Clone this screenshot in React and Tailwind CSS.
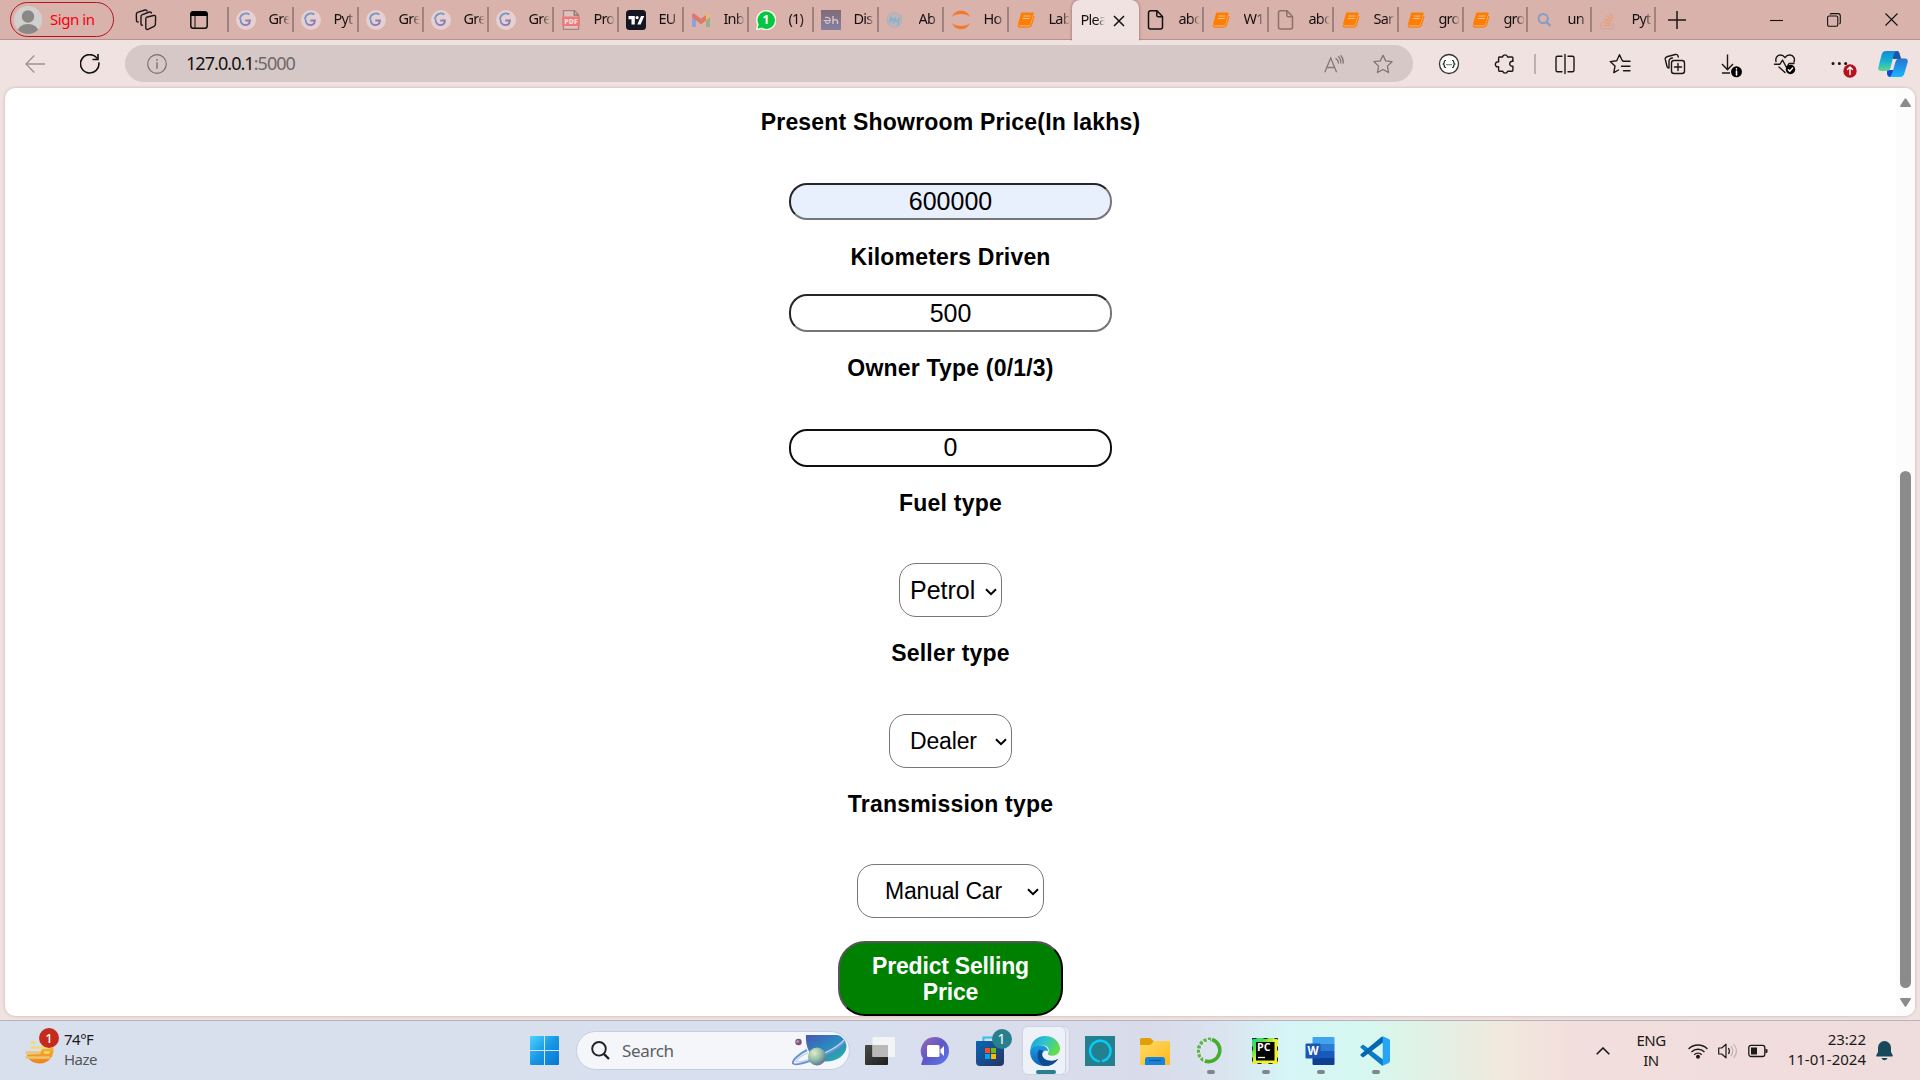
import React from "react";

const UI = "font-['Noto_Sans','Open_Sans',sans-serif]";

const GIcon = () => (
  <svg width="20" height="20" viewBox="0 0 20 20" className="shrink-0">
    <defs>
      <linearGradient id="gg" x1="0" y1="0" x2="1" y2="1">
        <stop offset="0" stopColor="#6fa3cf" />
        <stop offset="1" stopColor="#8d71ab" />
      </linearGradient>
    </defs>
    <circle cx="10" cy="10" r="10" fill="#e6cfd0" />
    <path d="M13.3 4.4A6 6 0 0 0 4 9.4M4.8 9.6c-.6 3.4 1.800 5.700 4.700 5.500 2.800-.2 4.300-2.100 4.400-4.600H9.300" fill="none" stroke="url(#gg)" strokeWidth="1.800" />
  </svg>
);
const PdfIcon = () => (
  <svg width="20" height="20" viewBox="0 0 20 20" className="shrink-0">
    <path d="M2.500 .7h11l4 4v14.600h-15z" fill="#e0c3bf" stroke="#a08580" strokeWidth="1.300" />
    <path d="M13.200 .7v4.300h4.300" fill="none" stroke="#8c7673" strokeWidth="1.300" />
    <rect x="1" y="6.500" width="18" height="9.500" rx="1" fill="#ec7b7b" />
    <text x="10" y="13.900" textAnchor="middle" fontSize="7" fontWeight="800" fontFamily="Open Sans" fill="#f6dcdc">PDF</text>
  </svg>
);
const TvIcon = () => (
  <svg width="20" height="20" viewBox="0 0 20 20" className="shrink-0">
    <rect width="20" height="20" rx="3.500" fill="#131722" />
    <path d="M2.500 6h6.300v8.500H5.500V9.200h-3zM15 6h3.300l-3.700 8.500h-3.300z" fill="#fff" />
    <circle cx="11.100" cy="7.600" r="1.600" fill="#fff" />
  </svg>
);
const GmailIcon = () => (
  <svg width="20" height="20" viewBox="0 0 20 20" className="shrink-0">
    <path d="M1 5.500V16a1 1 0 0 0 1 1h3V8z" fill="#8ca4d8" />
    <path d="M19 5.500V16a1 1 0 0 1-1 1h-3V8z" fill="#93b18a" />
    <path d="M15 5l1.500-1.300C17.500 3 19 3.500 19 5v2l-4 3.500z" fill="#ecbf5c" />
    <path d="M1 7V5c0-1.500 1.500-2 2.500-1.300L10 8.800l5-3.800v5.500L10 14.200z" fill="#e2766d" />
  </svg>
);
const WaIcon = () => (
  <svg width="20" height="20" viewBox="0 0 20 20" className="shrink-0">
    <path d="M.5 19.800 1.900 14.500A9.400 9.400 0 1 1 5.700 18.400z" fill="#06c63f" stroke="#f5f5ef" strokeWidth="1.500" />
    <text x="10" y="14.300" textAnchor="middle" fontSize="12" fontWeight="700" fontFamily="Noto Sans" fill="#fff">1</text>
  </svg>
);
const DhIcon = () => (
  <svg width="20" height="20" viewBox="0 0 20 20" className="shrink-0">
    <defs><linearGradient id="dh" x1="0" y1="0" x2="0" y2="1"><stop offset="0" stopColor="#806a76" /><stop offset="1" stopColor="#8580a2" /></linearGradient></defs>
    <rect width="20" height="20" fill="url(#dh)" />
    <path d="M4 7.500c3-.7 5.300.5 5.200 2.800-.1 2-1.700 3.200-3.400 3-1.800-.4-1.600-2.600 0-2.800h3M2.500 10.500h3" fill="none" stroke="#d8c4cd" strokeWidth="1.200" />
    <path d="M12 6v8M12 11.200c.8-2.200 4.500-2.200 4.500.5V14" fill="none" stroke="#d8c4cd" strokeWidth="1.400" />
  </svg>
);
const WpIcon = () => (
  <svg width="20" height="20" viewBox="0 0 20 20" className="shrink-0">
    <circle cx="8.500" cy="10" r="7.800" fill="#c3b3b4" />
    <path d="M3.500 13 5 7l.5 4c1-3 3-3 2.500 0L7.300 13.500M9.500 7.500c-.7 3 .5 4 1.700 3.300 1.300-.8 1.700-2 1.900-3.300l-1.200 8" fill="none" stroke="#7eb3d4" strokeWidth="1.400" />
    <circle cx="8.500" cy="10" r="7.300" fill="none" stroke="#a3b5c2" strokeWidth="1" />
  </svg>
);
const JupIcon = () => (
  <svg width="20" height="20" viewBox="0 0 20 20" className="shrink-0">
    <path d="M.8 7C3 2.500 6 .8 10 .8S17 2.500 19.200 7C16.500 4.700 13.500 4 10 4S3.500 4.700.8 7zM.8 13c2.200 4.500 5.200 6.200 9.200 6.200s7-1.700 9.200-6.200c-2.700 2.300-5.700 3-9.200 3s-6.500-.7-9.200-3z" fill="#f5792a" />
  </svg>
);
const BookIcon = () => (
  <svg width="20" height="20" viewBox="0 0 20 20" className="shrink-0">
    <path d="M6 2.500h10.500c1 0 1.400.7 1.200 1.500l-3 10.500c-.3 1-1 1.500-2 1.500H3.500c-1.200 0-1.900-.8-1.500-2L5 3.500c.2-.7.500-1 1-1z" fill="#ff7d00" />
    <path d="M7.500 6h7M6.800 8.500h7" stroke="#f6c79f" strokeWidth="1.100" />
    <path d="M2 14.500c0 1 .8 1.400 1.700 1.400h9c1 0 1.800-.5 2.100-1.500L17.500 5" fill="none" stroke="#efb98c" strokeWidth="1" />
    <path d="M2 15.500c.3 1.200 1 1.600 2 1.600h8.800c1.300 0 2.200-.7 2.600-2L18 6" fill="none" stroke="#ff7d00" strokeWidth="1.300" />
  </svg>
);
const FileIcon = ({ c }) => (
  <svg width="20" height="20" viewBox="0 0 20 20" className="shrink-0">
    <path d="M4.500 .8H11l5.500 5.700V17a2 2 0 0 1-2 2h-10a2 2 0 0 1-2-2V2.800a2 2 0 0 1 2-2zM10.800 1v4.200c0 1 .6 1.600 1.600 1.600h4" fill="none" stroke={c} strokeWidth="1.500" />
  </svg>
);
const FindIcon = () => (
  <svg width="20" height="20" viewBox="0 0 20 20" className="shrink-0">
    <circle cx="8.200" cy="8.500" r="4.600" fill="none" stroke="#849dc4" strokeWidth="2" />
    <path d="M11.500 12l4 4" stroke="#849dc4" strokeWidth="2.400" />
  </svg>
);
const SoIcon = () => (
  <svg width="20" height="20" viewBox="0 0 20 20" className="shrink-0">
    <path d="M2 13v5.700h12V13" fill="none" stroke="#d0a9a3" strokeWidth="1.500" />
    <path d="M4.500 15.500h7M4.600 12.300l7 1.500M5.500 9l6.500 3M7.500 5.500l5.300 4.800M10.500 3l3.800 5.800" stroke="#e9a07c" strokeWidth="1.600" fill="none" />
  </svg>
);

const tabsLeft = [
  [GIcon, "Gre"], [GIcon, "Pyt"], [GIcon, "Gre"], [GIcon, "Gre"], [GIcon, "Gre"],
  [PdfIcon, "Pro"], [TvIcon, "EU"], [GmailIcon, "Inb"], [WaIcon, "(1)"], [DhIcon, "Dis"],
  [WpIcon, "Ab"], [JupIcon, "Ho"], [BookIcon, "Lab"],
];
const tabsRight = [
  [FileIcon, "abc", "#111"], [BookIcon, "W1"], [FileIcon, "abc", "#8b706d"], [BookIcon, "Sar"],
  [BookIcon, "gro"], [BookIcon, "gro"], [FindIcon, "un"], [SoIcon, "Pyt"],
];

const Tab = ({ icon: Icon, text, c, last, narrow }) => (
  <div className={`flex h-full shrink-0 items-center pl-[7px] ${narrow ? "w-16" : "w-[65px]"}`}>
    <Icon c={c} />
    <div className="ml-[13px] w-[22px] shrink-0 pb-px whitespace-nowrap text-[14.5px] tracking-[-0.8px] text-[#151010] [mask-image:linear-gradient(90deg,#000_55%,transparent_95%)]">{text}</div>
    {!last && <div className="ml-auto h-[25px] w-[1.500px] shrink-0 bg-[#a08380]" />}
  </div>
);

const Tool = ({ children, w }) => (
  <svg width="24" height="24" viewBox="0 0 24 24" fill="none" stroke="#1b1717" strokeWidth={w || 1.400} strokeLinecap="round" strokeLinejoin="round" className="shrink-0 overflow-visible">
    {children}
  </svg>
);

const Label = ({ children, className }) => (
  <div className={`h-[26px] whitespace-nowrap text-[23px] leading-[26px] font-bold tracking-[0.2px] ${className}`}>{children}</div>
);

const Field = ({ children, className }) => (
  <div className={`flex w-[323px] items-center justify-center rounded-[18px] border-2 text-[25px] leading-none ${className}`}>{children}</div>
);

const Select = ({ children, className }) => (
  <div className={`flex h-[54px] items-center justify-between rounded-[17px] border border-[#767676] bg-white pr-[4px] ${className}`}>
    <span className="whitespace-nowrap">{children}</span>
    <svg width="12" height="8" viewBox="0 0 12 8" className="mt-[2px]">
      <path d="M1 1.300 6 6.200 11 1.300" fill="none" stroke="#000" strokeWidth="2" />
    </svg>
  </div>
);

const Cell = ({ children, dot }) => (
  <div className="relative flex h-full w-[55px] shrink-0 items-center justify-center">
    {children}
    {dot && <div className="absolute bottom-[6px] left-[24px] h-1 w-2 rounded-full bg-[#7f878b]" />}
  </div>
);

function TabStrip() {
  return (
    <div className={`flex h-10 items-center border-b border-[#b8918d] bg-[#d9b2ac] ${UI}`}>
      <div className="ml-[10px] flex h-[35px] w-[104px] shrink-0 items-center rounded-full border border-[#b0171f] pl-[3px]">
        <svg width="28" height="28" viewBox="0 0 28 28">
          <defs><clipPath id="av"><circle cx="14" cy="14" r="14" /></clipPath></defs>
          <g clipPath="url(#av)">
            <rect width="28" height="28" fill="#d2d0ce" />
            <circle cx="14" cy="10.500" r="6.200" fill="#8a8886" />
            <ellipse cx="14" cy="26" rx="10.500" ry="8" fill="#8a8886" />
          </g>
        </svg>
        <span className="ml-[8px] whitespace-nowrap text-[15px] tracking-[-0.45px] text-[#f5000c]">Sign in</span>
      </div>
      <svg className="ml-[21px] shrink-0" width="22" height="22" viewBox="0 0 22 22" fill="none" stroke="#1b1717" strokeWidth="1.400" strokeLinejoin="round" strokeLinecap="round">
        <path d="M11.500 8.300 18.600 6.500c1.100-.3 2 .3 2 1.400l-.2 7.400c0 1-.5 1.600-1.300 2l-6.300 3c-1.200.5-2-.1-2-1.300v-8.900c0-1 .2-1.600.7-1.800z" />
        <path d="M7.500 16.200c-1 .3-1.500-.3-1.500-1.200V7.600c0-1 .4-1.700 1.400-2l7-2.600c1-.3 1.800.2 2 1" />
        <path d="M3.200 13c-1 .2-1.700-.3-1.700-1.300L1.300 5.500c0-1 .4-1.800 1.300-2.200L10 1c1-.3 1.800 0 2 1" />
      </svg>
      <svg className="ml-[33px] shrink-0" width="18" height="18" viewBox="0 0 18 18">
        <rect x=".8" y=".8" width="16.400" height="16.400" rx="2.500" fill="none" stroke="#111" strokeWidth="1.500" />
        <path d="M.5 5V3A2.500 2.500 0 0 1 3 .5h12A2.500 2.500 0 0 1 17.500 3v2z" fill="#000" />
        <path d="M5 5v12" stroke="#111" strokeWidth="1" />
      </svg>
      <div className="ml-[19px] h-[25px] w-[1.500px] shrink-0 bg-[#a08380]" />
      {tabsLeft.map(([I, t], i) => <Tab key={i} icon={I} text={t} last={i === 12} />)}
      <div className="relative z-10 -ml-[2px] flex h-[41px] w-[67px] shrink-0 items-center self-start rounded-t-lg bg-[#f0e2e1] pl-[9px] shadow-[0_0_3px_rgba(90,40,40,0.6)] [clip-path:inset(-4px_-4px_0_-4px)]">
        <div className="w-[24px] pb-[2px] whitespace-nowrap text-[14.5px] tracking-[-0.7px] text-[#151010] [mask-image:linear-gradient(90deg,#000_65%,transparent_100%)]">Plea</div>
        <svg className="ml-[8px]" width="12" height="12" viewBox="0 0 12 12"><path d="M1 1l10 10M11 1 1 11" stroke="#111" strokeWidth="1.500" /></svg>
      </div>
      {tabsRight.map(([I, t, c], i) => <Tab key={i} icon={I} text={t} c={c} narrow={i > 4} />)}
      <svg className="ml-[12px] shrink-0" width="18" height="18" viewBox="0 0 18 18"><path d="M0 9h18M9 0v18" stroke="#1b1717" strokeWidth="1.500" /></svg>
      <svg className="ml-auto shrink-0" width="14" height="14" viewBox="0 0 14 14"><path d="M0 7.500h13" stroke="#111" strokeWidth="1.100" /></svg>
      <svg className="ml-[43px] shrink-0" width="14" height="14" viewBox="0 0 14 14" fill="none" stroke="#111" strokeWidth="1.100">
        <rect x=".6" y="3" width="10.200" height="10.200" rx="1.500" />
        <path d="M3 1.300C3.500.7 4 .6 4.500.6H11A2.400 2.400 0 0 1 13.300 3v6.500c0 .8-.3 1.200-.8 1.500" />
      </svg>
      <svg className="mr-[22px] ml-[44px] shrink-0" width="13" height="13" viewBox="0 0 13 13"><path d="M.5.5l12 12M12.500.5l-12 12" stroke="#111" strokeWidth="1.100" /></svg>
    </div>
  );
}

function Toolbar() {
  return (
    <div className={`flex h-12 items-center bg-[#f0e2e1] ${UI}`}>
      <svg className="ml-[25px] shrink-0" width="20" height="18" viewBox="0 0 20 18" fill="none" stroke="#9d9190" strokeWidth="1.300"><path d="M20 9H1M9.300.5 1 9l8.300 8.500" /></svg>
      <svg className="ml-[35px] shrink-0" width="20" height="20" viewBox="0 0 20 20" fill="none" stroke="#111" strokeWidth="1.600"><path d="M18.800 8.300A9.200 9.200 0 1 1 17 4.200M18 0v5.500h-5.500" /></svg>
      <div className="-mt-[1px] ml-[25px] flex h-[37px] w-[1288px] shrink-0 items-center rounded-full bg-[#d6c8c7] pl-[22px]">
        <svg width="20" height="20" viewBox="0 0 20 20" fill="none" stroke="#777070" strokeWidth="1.200"><circle cx="10" cy="10" r="9.300" /><path d="M10 8.300v6.500M10 5v1.700" strokeWidth="1.400" /></svg>
        <span className="-mt-[2px] ml-[19px] text-[18px] leading-none tracking-[-0.95px] text-[#111]">127.0.0.1<span className="text-[#6f6968]">:5000</span></span>
        <svg className="ml-auto" width="20" height="18" viewBox="0 0 20 18" fill="none" stroke="#857a79" strokeWidth="1.300">
          <path d="M.8 17.300 6.700 3l5.900 14.300M3 12.500h7.500M11.500 3.300c2 1 3 3 2.800 5.200M14 1.200c2.300 1.500 3 4.500 2.700 7.300M16.500.3c2.300 2 3 5 2.700 8.500" />
        </svg>
        <svg className="mr-[20px] ml-[29px]" width="20" height="20" viewBox="0 0 20 20" fill="none" stroke="#7f7574" strokeWidth="1.300" strokeLinejoin="round"><path d="M10 1.200l2.700 5.700 6.300.8-4.600 4.400 1.100 6.400-5.500-3-5.500 3 1.100-6.400L1 7.700l6.300-.8z" /></svg>
      </div>
      <div className="ml-[24px] flex items-center">
        <Tool w={1.300}><circle cx="12" cy="12" r="9.500" fill="#fff" stroke="#333" /><path d="M8.500 8.500c-1.300 0-1.300.6-1.300 1.700s-.2 1.800-1.200 1.800c1 0 1.200.7 1.200 1.800s0 1.700 1.300 1.700M15.500 8.500c1.300 0 1.300.6 1.300 1.700s.2 1.800 1.200 1.800c-1 0-1.200.7-1.200 1.800s0 1.700-1.300 1.700M10 12.700h.1M12 12.700h.1M14 12.700h.1" strokeWidth="1.200" /></Tool>
        <div className="ml-[32px] flex"><Tool><path d="M6 5h3.500a2.600 2.600 0 0 1 5.100 0H19c.6 0 .9.300.9.900v3.500c-4-.8-4.500 5.300 0 4.900v4c0 .6-.3.900-.9.900h-4.300a2.600 2.600 0 0 1-5 0H6.500c-.6 0-.9-.3-.9-.900v-3.500c-4.200 1-4.500-5.500 0-5V5.900c0-.6.100-.9.400-.9z" /></Tool></div>
        <div className="ml-[17px] h-5 w-[1.500px] bg-[#bdb0af]" />
        <div className="ml-[17px] flex"><Tool><path d="M9 4.200H4.500a1.500 1.500 0 0 0-1.500 1.500v12.600a1.500 1.500 0 0 0 1.500 1.500H9M15 4.200h4.500A1.500 1.500 0 0 1 21 5.700v12.600a1.500 1.500 0 0 1-1.500 1.500H15M12 2.500v19" strokeWidth="1.400" /></Tool></div>
        <div className="ml-[31px] flex"><Tool><path d="M14 8 11.500 2.700 8.700 8.700l-6.500.9 4.800 4.500-1.200 6.500 4.700-2.600M15 9.200h7M13.500 14.200H22M15.500 18.700H22M14 8l1 1.200" /></Tool></div>
        <div className="ml-[31px] flex"><Tool><rect x="8.500" y="8.500" width="13" height="13" rx="2.500" /><path d="M15 11.500v7M11.500 15h7M6 16c-1 0-1.700-.5-2-1.500L2.300 7.500C2 6 2.500 5.200 3.800 4.800l8.500-2.300c1.400-.4 2.300.2 2.700 1.500l.3 1M6 16V9.500A3.500 3.500 0 0 1 9.500 6" /></Tool></div>
        <div className="ml-[32px] flex"><Tool><path d="M8.500 2.500v15M3 12l5.500 5.700L14 12M3 21h8" strokeLinecap="butt" /><circle cx="17.500" cy="19.800" r="5.500" fill="#000" stroke="none" /><path d="M17.500 19v4M17.500 16.800v.2" stroke="#fff" strokeWidth="1.600" /></Tool></div>
        <div className="ml-[30px] flex"><Tool><path d="M12 20.500 6 15M3 9.500c-.8-3.500 1-6.300 4-6.500 2.200-.2 3.800.9 5 2.700 1.200-1.800 2.800-2.900 5-2.700 3.500.3 5.300 3.500 4 7M1.500 12.200H7L9.500 8l4 7.500 2.500-4h5" /><circle cx="17.500" cy="17.500" r="4.700" fill="#000" stroke="none" /><path d="M15.300 17.700l1.500 1.500 2.800-3.200" stroke="#fff" /></Tool></div>
        <div className="ml-[33px] flex"><Tool><path d="M3 11.500h.1M9.300 11.500h.1M15.600 11.500h.1" strokeWidth="3" /><circle cx="20" cy="19" r="6.700" fill="#b5121b" stroke="none" /><path d="M20 22.500v-7M17.500 17.500l2.500-2.500 2.500 2.500" stroke="#fff" strokeWidth="1.400" /></Tool></div>
      </div>
      <svg className="mr-[12px] ml-auto shrink-0" width="30" height="28" viewBox="0 0 30 28">
        <defs>
          <linearGradient id="c1" x1="0" y1="0" x2="0" y2="1"><stop offset="0" stopColor="#1489d4" /><stop offset=".5" stopColor="#13b2d2" /><stop offset="1" stopColor="#62d78f" /></linearGradient>
          <linearGradient id="c2" x1="0" y1="0" x2="0" y2="1"><stop offset="0" stopColor="#2872d0" /><stop offset="1" stopColor="#17b8fb" /></linearGradient>
        </defs>
        <path d="M15 1h4c2 0 2.500 2 3 4l1.300 4H15z" fill="#1558a5" />
        <path d="M9 20h7l-3 7c-2 .3-3.300-.5-4-3z" fill="#1848cf" />
        <path d="M8 1h11c-2 .5-2.800 2-3.300 4l-3 12c-.8 3-2 4-4.700 4H3c-2.200 0-3.200-1.500-2.600-4L3.500 5C4.200 2.300 5.500 1 8 1z" fill="url(#c1)" />
        <path d="M22 27H11c2-.5 2.800-2 3.300-4l3-10.500c.8-3 2-4 4.700-4h5c2.200 0 3.200 1.500 2.600 4L26.500 23c-.7 2.700-2 4-4.500 4z" fill="url(#c2)" />
      </svg>
    </div>
  );
}

function Page() {
  return (
    <div className="mx-[5px] flex h-[928px] overflow-hidden rounded-[10px] bg-white shadow-[0_0_3px_rgba(120,70,70,0.35)]">
      <div className="flex w-[1891px] flex-col items-center font-['Liberation_Sans',Arial,sans-serif] text-black">
        <Label className="mt-[21px]">Present Showroom Price(In lakhs)</Label>
        <Field className="mt-[48px] h-[37px] border-t-[#262626] border-r-[#767676] border-b-[#767676] border-l-[#262626] bg-[#e8f0fe]">600000</Field>
        <Label className="mt-[24px]">Kilometers Driven</Label>
        <Field className="mt-[24px] h-[38px] border-t-[#262626] border-r-[#767676] border-b-[#767676] border-l-[#262626]">500</Field>
        <Label className="mt-[23px]">Owner Type (0/1/3)</Label>
        <Field className="mt-[48px] h-[38px] border-[#101010] pb-px">0</Field>
        <Label className="mt-[23px]">Fuel type</Label>
        <Select className="mt-[47px] w-[103px] pt-px pl-[10px] text-[25px]">Petrol</Select>
        <Label className="mt-[23px]">Seller type</Label>
        <Select className="mt-[48px] w-[123px] pl-[20px] text-[23px] tracking-[-0.15px]">Dealer</Select>
        <Label className="mt-[23px]">Transmission type</Label>
        <Select className="mt-[47px] w-[187px] pl-[27px] text-[23px] tracking-[-0.2px]">Manual Car</Select>
        <button className="mt-[23px] flex h-[75px] w-[225px] shrink-0 items-center justify-center rounded-[27px] border-2 border-t-[#555] border-r-black border-b-black border-l-[#555] bg-[#008000] px-6 text-center text-[23px] leading-[26px] font-bold tracking-[-0.2px] whitespace-nowrap text-white">Predict Selling<br />Price</button>
      </div>
      <div className="flex w-[19px] flex-col items-center bg-[#fcfcfc] pt-[10px]">
        <svg width="11" height="9" viewBox="0 0 11 9"><path d="M4.700.8q.8-1 1.600 0L11 8q0 1-1 1H1q-1 0-1-1z" fill="#8b8b8b" /></svg>
        <div className="mt-[364px] h-[517px] w-[11px] rounded-full bg-[#8b8b8b]" />
        <svg className="mt-[10px]" width="11" height="9" viewBox="0 0 11 9"><path d="M4.700 8.200q.8 1 1.600 0L11 1q0-1-1-1H1Q0 0 0 1z" fill="#8b8b8b" /></svg>
      </div>
    </div>
  );
}

function Taskbar() {
  return (
    <div className={`mt-[4px] flex h-[60px] items-center border-t border-[#b3b4c0] bg-[linear-gradient(90deg,#d9e0ed_0%,#d8dfee_45%,#d9dbea_60%,#dae5f0_64%,#d5f5f7_67%,#d6f8f0_71%,#e3f0e3_75%,#f2e8dc_78.500%,#f2dedd_82%,#efdcdc_100%)] ${UI}`}>
      <div className="flex w-[530px] items-center pb-[5px] pl-[25px]">
        <div className="relative">
          <svg width="34" height="38" viewBox="0 0 34 38">
            <defs><linearGradient id="sun" x1="0" y1="0" x2="0" y2="1"><stop offset="0" stopColor="#f7b42c" /><stop offset="1" stopColor="#f08019" /></linearGradient></defs>
            <path d="M1.500 25.500 14 25l3-5 11.500-1.500C29.500 28 23 34.500 14.800 34.500 8 34.500 3 31 1.500 25.500z" fill="url(#sun)" />
            <path d="M6.500 13.500h3M6.500 18.500h18M20 23.500h3.500" stroke="#f5d776" strokeWidth="2.600" strokeLinecap="round" />
            <path d="M1.500 23.500h13M1.500 28.500h22.500" stroke="#e9c576" strokeWidth="2.600" strokeLinecap="round" />
          </svg>
          <div className="absolute top-[-1px] left-[14px] flex h-5 w-5 items-center justify-center rounded-full bg-[#c42b1c] text-[13px] leading-none font-medium text-white">1</div>
        </div>
        <div className="ml-[5px] pt-px text-[15px] leading-5 tracking-[-0.5px] text-[#1a1a1a]">74°F<div className="text-[#54575c]">Haze</div></div>
      </div>
      <svg width="29" height="29" viewBox="0 0 29 29" className="shrink-0">
        <defs><linearGradient id="win" x1="0" y1="0" x2="1" y2="1"><stop offset="0" stopColor="#4fd3ff" /><stop offset=".5" stopColor="#1797e5" /><stop offset="1" stopColor="#0675d0" /></linearGradient></defs>
        <path d="M1 0h13v14H0V1q0-1 1-1zM15 0h13q1 0 1 1v13H15zM0 15h14v14H1q-1 0-1-1zM15 15h14v13q0 1-1 1H15z" fill="url(#win)" />
      </svg>
      <div className="ml-[17px] flex h-[39px] w-[274px] shrink-0 items-center rounded-full border border-[#c6cddd] bg-[#f4f6fa] pl-[14px]">
        <svg width="19" height="19" viewBox="0 0 19 19" fill="none" stroke="#222" strokeWidth="1.900"><circle cx="8" cy="7.800" r="6.800" /><path d="M12.800 12.800 18 18" strokeWidth="2.400" /></svg>
        <span className="ml-[12px] text-[17px] tracking-[-0.35px] text-[#5c5e62]">Search</span>
        <svg className="mr-[2px] ml-auto" width="56" height="32" viewBox="0 0 56 32">
          <defs>
            <linearGradient id="pl" x1="0" y1="0" x2="1" y2="1"><stop offset="0" stopColor="#4b57b0" /><stop offset=".45" stopColor="#2c86c0" /><stop offset=".8" stopColor="#2aa3b0" /><stop offset="1" stopColor="#8fc08e" /></linearGradient>
            <radialGradient id="mn" cx=".35" cy=".3" r=".8"><stop offset="0" stopColor="#e6ecc8" /><stop offset=".5" stopColor="#8fbfa8" /><stop offset="1" stopColor="#5b5e8f" /></radialGradient>
          </defs>
          <path d="M15 0h31c6 1 9.500 7 9.500 12-1 9-10 14.500-20.500 14.500C22 27 14 15 15 0z" fill="url(#pl)" />
          <path d="M16 15C8 19 1 25 2 28.500 4 31 13 28 21 25c14-5 27-12 33-19" fill="none" stroke="#6e93d2" strokeWidth="2" />
          <path d="M17 18C11 20 6 24 5 26.500c3 1 9-.5 16-3.500 14-5 27-12 32-18" fill="none" stroke="#bcd3f0" strokeWidth="1.300" />
          <circle cx="7.500" cy="7" r="3.200" fill="#78507c" /><circle cx="6.800" cy="6.500" r="1.600" fill="#b8909c" />
          <circle cx="26" cy="21.500" r="9" fill="url(#mn)" />
        </svg>
      </div>
      <div className="ml-[2.500px] flex h-full items-center">
        <Cell>
          <svg width="30" height="30" viewBox="0 0 30 30">
            <defs><linearGradient id="tv" x1="0" y1="0" x2="1" y2="1"><stop offset="0" stopColor="#484844" /><stop offset="1" stopColor="#20201e" /></linearGradient></defs>
            <rect y="9" width="23" height="20" rx="1" fill="url(#tv)" />
            <rect x="7.500" y="1" width="22.500" height="20" rx="1" fill="#f4f4f4" opacity=".95" />
            <rect x="7.500" y="9" width="15.500" height="12" fill="#b9b9b9" />
          </svg>
        </Cell>
        <Cell>
          <svg width="30" height="30" viewBox="0 0 30 30">
            <defs><linearGradient id="ch" x1="0" y1="0" x2="1" y2="1"><stop offset="0" stopColor="#9a6ab4" /><stop offset=".5" stopColor="#5e57c8" /><stop offset="1" stopColor="#5b7fec" /></linearGradient></defs>
            <path d="M15 1a14 14 0 1 1 0 28H2q-1 0-.7-1l1.700-5.500A14 14 0 0 1 15 1z" fill="url(#ch)" />
            <rect x="7" y="9" width="12.500" height="12" rx="1.500" fill="#fff" /><path d="M20.500 13.500 24 10v10l-3.500-3.500z" fill="#fff" />
          </svg>
        </Cell>
        <Cell>
          <svg width="30" height="30" viewBox="0 0 30 30">
            <defs><linearGradient id="st" x1="0" y1="0" x2="1" y2="1"><stop offset="0" stopColor="#0a66b8" /><stop offset="1" stopColor="#26345f" /></linearGradient></defs>
            <path d="M8.500 6V1.500H20V6" fill="none" stroke="#2ac0f2" strokeWidth="2" />
            <path d="M1.500 5h27q.5 0 .5.500V26a4 4 0 0 1-4 4H5a4 4 0 0 1-4-4V5.500q0-.5.500-.5z" fill="url(#st)" />
            <path fill="#f25022" d="M10 12h5v5h-5z" /><path fill="#7fba00" d="M16 12h5v5h-5z" /><path fill="#00a4ef" d="M10 18h5v5h-5z" /><path fill="#ffb900" d="M16 18h5v5h-5z" />
          </svg>
          <div className="absolute top-[8px] right-[6px] flex h-5 w-5 items-center justify-center rounded-full bg-[#28808e] text-[14px] leading-none text-white">1</div>
        </Cell>
        <Cell>
          <div className="absolute top-[5px] left-[4px] h-[49px] w-[48px] rounded-md border border-[#cfd3e2] bg-[#e6e9f3]" />
          <div className="absolute top-[5px] left-[4px] h-[49px] w-[44px] rounded-md border border-[#d0d4e2] bg-[#eef1f8]" />
          <div className="absolute bottom-[6px] left-[18px] h-1 w-5 rounded-full bg-[#28808e]" />
          <svg width="30" height="30" viewBox="0 0 30 30" className="relative">
            <defs>
              <linearGradient id="e1" x1="0" y1="0" x2="1" y2=".4"><stop offset="0" stopColor="#1a9bdc" /><stop offset=".5" stopColor="#2cc3cf" /><stop offset="1" stopColor="#62dc4e" /></linearGradient>
              <linearGradient id="e2" x1="0" y1="0" x2="0" y2="1"><stop offset="0" stopColor="#1b9de2" /><stop offset="1" stopColor="#0f62b8" /></linearGradient>
            </defs>
            <path d="M.3 14C1 5.500 7 0 15 0c9 0 15 6.500 15 12.500 0 4.500-3.500 7.200-7.700 7.200-3 0-5-1-4.300-2.500 2-3.500.5-8-6-8C6 9.200 2 11 .3 14z" fill="url(#e1)" />
            <path d="M.2 14.500C1.500 10.500 6 9 11 9.300c4.500.3 7.200 3 7 6-1.500-1.700-6-.5-6 4 0 6 8 9 14.500 5.500C23 29 19 30 15 30 6 30-.6 23 .2 14.500z" fill="url(#e2)" />
            <path d="M9.500 13.500C6 17 7 27 14.500 30c5 .3 10-2 13.300-6.300.3-.6-.2-.8-.7-.5-6.100 3.300-15 .8-15-5.200 0-1.500.4-2.500.8-3.300z" fill="#0c4c93" />
          </svg>
        </Cell>
        <Cell>
          <svg width="30" height="30" viewBox="0 0 30 30"><rect width="30" height="30" fill="#24808f" /><path d="M12.700 24.800A10.200 10.200 0 1 1 17 25M13 24.900q1 .5 1.300 1.100" fill="none" stroke="#05cdf8" strokeWidth="2.400" /></svg>
        </Cell>
        <Cell>
          <svg width="30" height="30" viewBox="0 0 30 30">
            <defs><linearGradient id="fo" x1="0" y1="0" x2="1" y2="1"><stop offset="0" stopColor="#ffdb66" /><stop offset="1" stopColor="#fdb918" /></linearGradient></defs>
            <path d="M0 3.500Q0 2 1.500 2h8q1 0 1.700.8L13.500 5v6H0z" fill="#e0a007" />
            <path d="M0 9h9.500q1 0 1.800-.8L14 5h15q1 0 1 1v22q0 1-1 1H1q-1 0-1-1z" fill="url(#fo)" />
            <path d="M5 29v-5.500Q5 21 7.500 21h15q2.500 0 2.500 2.500V29z" fill="#1583da" /><path d="M9 24.500h12" stroke="#0b569d" strokeWidth="1.200" />
          </svg>
        </Cell>
        <Cell dot>
          <svg width="28" height="28" viewBox="0 0 28 28" fill="none" className="ml-[2px]">
            <path d="M15 2.500A11.300 11.300 0 1 1 8 24" stroke="#44ad2c" strokeWidth="3.600" />
            <path d="M14 2.500A11.300 11.300 0 0 0 8 24" stroke="#5db548" strokeWidth="3.600" strokeDasharray="3 1.500" />
            <path d="M13 3.500A11 11 0 0 0 7.500 22.500" stroke="#e5f1e6" strokeWidth="1.300" strokeDasharray="2.500 2" />
          </svg>
        </Cell>
        <Cell dot>
          <svg width="26" height="26" viewBox="0 0 26 26">
            <defs><linearGradient id="pc" x1="0" y1="0" x2="1" y2="1"><stop offset="0" stopColor="#21d789" /><stop offset=".25" stopColor="#4be04d" /><stop offset=".5" stopColor="#e5f03a" /><stop offset="1" stopColor="#f7ef2a" /></linearGradient></defs>
            <rect width="26" height="26" fill="url(#pc)" />
            <rect x=".5" y=".5" width="25" height="25" fill="none" stroke="#222" strokeWidth="1" strokeDasharray="4 7" />
            <rect x="4" y="4" width="18.500" height="18.500" fill="#000" />
            <text x="5" y="13" fontSize="10" fontWeight="700" fontFamily="Open Sans" fill="#fff" textLength="13.500" lengthAdjust="spacingAndGlyphs">PC</text>
            <path d="M6 19.500h7" stroke="#fff" strokeWidth="1.300" />
          </svg>
        </Cell>
        <Cell dot>
          <svg width="30" height="28" viewBox="0 0 30 28">
            <path d="M8.500 0h20q1 0 1 1v6.500h-22V1q0-1 1-1z" fill="#41a5ee" /><path d="M7.500 7h22v7h-22z" fill="#2b7cd3" /><path d="M7.500 14h22v7h-22z" fill="#185abd" /><path d="M7.500 21h22v6q0 1-1 1h-20q-1 0-1-1z" fill="#103f91" />
            <rect x=".5" y="6.500" width="15" height="15" rx="1" fill="#1b55b5" />
            <text x="8" y="18.200" fontSize="11.500" fontWeight="700" fontFamily="Open Sans" fill="#fff" textAnchor="middle">W</text>
          </svg>
        </Cell>
        <Cell dot>
          <svg width="30" height="30" viewBox="0 0 30 30">
            <path d="M.6 10.500 2.200 9q.8-.6 1.600 0L23 23.500V29q-1 .7-2-.2L.6 11.800q-.6-.7 0-1.300z" fill="#0a7cc8" />
            <path d="M.6 19.500 2.200 21q.8.6 1.600 0L23 6.500V1q-1-.7-2 .2L.6 18.200q-.6.7 0 1.300z" fill="#0468b0" />
            <path d="M21 29.200q1 .9 2.200.4l5.600-2.700Q30 26.300 30 25V5q0-1.300-1.200-1.900L23.200.4Q22 0 21 .8c.8-.5 1.700 0 1.700 1v26.400c0 1-.9 1.500-1.700 1z" fill="#25a5f3" />
          </svg>
        </Cell>
      </div>
      <div className="mr-[27px] ml-auto flex items-center">
        <svg width="14" height="8" viewBox="0 0 14 8" fill="none" stroke="#1a1a1a" strokeWidth="1.600"><path d="M.7 7.300 7 1l6.300 6.300" /></svg>
        <div className="ml-[26px] w-[30px] pb-[2px] text-center text-[15px] leading-5 tracking-[-0.5px] text-[#1a1a1a]">ENG<br />IN</div>
        <svg className="ml-[22px]" width="20" height="16" viewBox="0 0 20 16" fill="none" stroke="#1a1a1a" strokeWidth="1.400"><path d="M.6 6a13.200 13.200 0 0 1 18.800 0M3.500 8.900a9.200 9.200 0 0 1 13 0M6.300 11.700a5.200 5.200 0 0 1 7.400 0" /><circle cx="10" cy="13.800" r="1.300" fill="#1a1a1a" /></svg>
        <svg className="ml-[10px]" width="20" height="16" viewBox="0 0 20 16" fill="none" strokeWidth="1.200" stroke="#1a1a1a"><path d="M.7 5v6h3L8 14.800V1.200L3.700 5zM10.500 5q1.800 3 0 6" strokeLinejoin="round" /><path d="M13 3q3.500 5 0 10M15.700 1q5.500 7 0 14" stroke="#bfb0b1" /></svg>
        <svg className="ml-[10px]" width="20" height="14" viewBox="0 0 20 14"><rect x=".8" y="1.300" width="16" height="11.200" rx="2.200" fill="none" stroke="#1a1a1a" strokeWidth="1.300" /><rect x="3" y="3.500" width="6" height="7" fill="#1a1a1a" /><path d="M17.500 4.800l2 .8v2.800l-2 .8z" fill="#1a1a1a" /></svg>
        <div className="w-[98px] pb-[4px] text-right text-[15px] leading-5 tracking-[0px] whitespace-nowrap text-[#1a1a1a]">23:22<br />11-01-2024</div>
        <svg className="ml-[10px]" width="17" height="20" viewBox="0 0 17 20" fill="#17495a"><path d="M8.500 0a6.500 6.500 0 0 1 6.500 6.500V11l1.800 3.500q.2 1-.8 1H1q-1 0-.8-1L2 11V6.500A6.500 6.500 0 0 1 8.500 0zM5.500 17h6q-.7 2.300-3 2.300t-3-2.300z" /></svg>
      </div>
    </div>
  );
}

export default function App() {
  return (
    <div className="h-[1080px] w-[1920px] overflow-hidden bg-[#f0e2e1]">
      <TabStrip />
      <Toolbar />
      <Page />
      <Taskbar />
    </div>
  );
}
